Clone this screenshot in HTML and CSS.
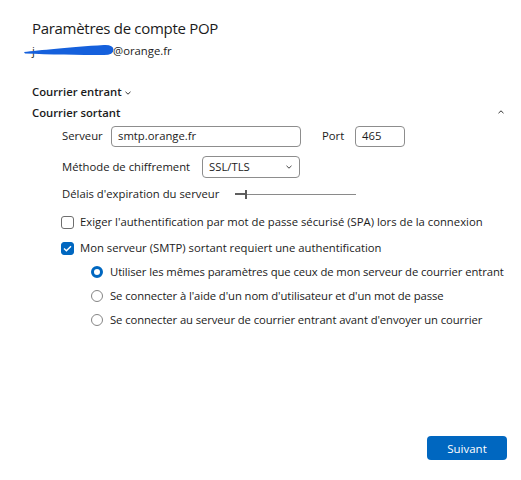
FILE: index.html
```html
<!DOCTYPE html>
<html lang="fr">
<head>
<meta charset="utf-8">
<title>Paramètres de compte POP</title>
<link rel="stylesheet" href="styles.css">
</head>
<body>
<div class="page">
  <header class="head">
    <h1 class="title">Paramètres de compte POP</h1>
    <div class="email"><span class="local">j<svg class="scribble" viewBox="0 0 90 12" preserveAspectRatio="none" aria-hidden="true"><path d="M0 8 C15 6.5 45 3 80 1 Q89 0.5 89.5 5.5 Q89.5 11 80 11 C55 11 25 10.5 1 9.5 Z" fill="#1560dc"/></svg></span><span class="domain">@orange.fr</span></div>
  </header>

  <section class="accounts">
    <div class="sec-head">
      <span class="sec-title">Courrier entrant</span>
      <svg class="chev-down" width="6" height="4" viewBox="0 0 6 4"><path d="M0.5 0.8 L3 3.2 L5.5 0.8" fill="none" stroke="#333" stroke-width="1"/></svg>
    </div>
    <div class="sec-head open">
      <span class="sec-title">Courrier sortant</span>
      <svg class="chev-up" width="6" height="4" viewBox="0 0 6 4"><path d="M0.5 3.2 L3 0.8 L5.5 3.2" fill="none" stroke="#333" stroke-width="1"/></svg>
    </div>

    <div class="panel">
      <div class="row row-server">
        <span class="lbl lbl-server">Serveur</span>
        <span class="field field-server">smtp.orange.fr</span>
        <span class="lbl lbl-port">Port</span>
        <span class="field field-port">465</span>
      </div>
      <div class="row row-enc">
        <span class="lbl lbl-enc">Méthode de chiffrement</span>
        <span class="field field-select">SSL/TLS
          <svg class="sel-chev" width="6" height="4" viewBox="0 0 6 4"><path d="M0.5 0.8 L3 3.2 L5.5 0.8" fill="none" stroke="#444" stroke-width="1"/></svg>
        </span>
      </div>
      <div class="row row-timeout">
        <span class="lbl">Délais d'expiration du serveur</span>
        <span class="slider">
          <span class="slider-fill"></span>
          <span class="slider-thumb"></span>
          <span class="slider-rest"></span>
        </span>
      </div>
      <div class="row row-check row-spa">
        <span class="checkbox"></span>
        <span class="txt">Exiger l'authentification par mot de passe sécurisé (SPA) lors de la connexion</span>
      </div>
      <div class="row row-check row-auth">
        <span class="checkbox checked">
          <svg width="9" height="7" viewBox="0 0 9 7"><path d="M1 3.6 L3.4 5.8 L8 1.2" fill="none" stroke="#fff" stroke-width="1.4"/></svg>
        </span>
        <span class="txt">Mon serveur (SMTP) sortant requiert une authentification</span>
      </div>
      <div class="radios">
        <div class="row row-radio first">
          <span class="radio selected"></span>
          <span class="txt">Utiliser les mêmes paramètres que ceux de mon serveur de courrier entrant</span>
        </div>
        <div class="row row-radio">
          <span class="radio"></span>
          <span class="txt">Se connecter à l'aide d'un nom d'utilisateur et d'un mot de passe</span>
        </div>
        <div class="row row-radio">
          <span class="radio"></span>
          <span class="txt">Se connecter au serveur de courrier entrant avant d'envoyer un courrier</span>
        </div>
      </div>
    </div>
  </section>

  <footer class="foot">
    <button class="primary">Suivant</button>
  </footer>
</div>
</body>
</html>
```

FILE: styles.css
```css
* { box-sizing: border-box; }
html, body { margin: 0; padding: 0; background: #fff; }
body {
  font-family: "Open Sans", "Noto Sans", sans-serif;
  font-size: 11.3px;
  color: #1b1b1b;
}
.page {
  width: 521px;
  height: 480px;
  display: flex;
  flex-direction: column;
  padding: 18px 14px 20px 32px;
}
.head { display: flex; flex-direction: column; }
.title {
  margin: 0;
  font-size: 15px;
  font-weight: 400;
  line-height: 20px;
  letter-spacing: -0.3px;
}
.email {
  margin-top: 5px;
  height: 16px;
  line-height: 16px;
  white-space: nowrap;
}
.local {
  position: relative;
  display: inline-block;
  width: 81px;
  height: 16px;
  vertical-align: top;
  color: #1b1b1b;
}
.scribble {
  position: absolute;
  left: -8px;
  top: 1px;
  width: 90px;
  height: 12px;
}
.domain { display: inline-block; vertical-align: top; }

.accounts { margin-top: 25px; display: flex; flex-direction: column; }
.sec-head {
  display: flex;
  align-items: center;
  height: 16px;
  line-height: 16px;
}
.sec-head.open { margin-top: 5px; justify-content: space-between; }
.sec-title { font-weight: 600; }
.chev-down { margin-left: 3px; margin-top: 2px; }
.chev-up { margin-right: 3px; margin-top: -2px; }

.panel {
  padding-left: 30px;
  display: flex;
  flex-direction: column;
}
.row { display: flex; align-items: center; }
.row-server { margin-top: 4px; height: 22px; }
.lbl { line-height: 16px; white-space: nowrap; }
.lbl-server { width: 49px; flex: none; }
.lbl-enc { width: 140px; flex: none; }
.field {
  display: flex;
  align-items: center;
  height: 21px;
  border: 1px solid #8d8d8d;
  border-radius: 4px;
  padding: 0 6px;
  line-height: 16px;
  background: #fff;
  flex: none;
}
.field-server { width: 190px; }
.lbl-port { margin-left: 21px; width: 33px; flex: none; }
.field-port { width: 50px; }
.row-enc { margin-top: 9px; height: 22px; }
.field-select {
  width: 98px;
  height: 22px;
  justify-content: space-between;
  padding-right: 7px;
}
.row-timeout { margin-top: 7px; height: 18px; }
.slider {
  margin-left: 16px;
  display: flex;
  align-items: center;
  width: 121px;
  height: 10px;
}
.slider-fill { width: 10px; height: 2px; background: #5f5f5f; }
.slider-thumb { width: 2px; height: 9px; background: #5a5a5a; }
.slider-rest { flex: 1; height: 1px; background: #8a8a8a; }

.row-check { height: 18px; }
.row-spa { margin-top: 10px; }
.row-auth { margin-top: 8px; }
.checkbox {
  width: 13px;
  height: 13px;
  border: 1px solid #6e6e6e;
  border-radius: 3px;
  margin-left: -1px;
  margin-right: 6px;
  display: flex;
  align-items: center;
  justify-content: center;
  flex: none;
}
.checkbox.checked { background: #0067c0; border-color: #0067c0; }
.txt { line-height: 16px; white-space: nowrap; }

.radios { padding-left: 29px; display: flex; flex-direction: column; }
.row-radio { height: 18px; margin-top: 6px; }
.row-radio .txt { letter-spacing: -0.1px; }
.radio {
  width: 12px;
  height: 12px;
  border-radius: 50%;
  border: 1px solid #858585;
  margin-right: 7px;
  flex: none;
}
.radio.selected { border: 3.5px solid #0067c0; background: #fff; }

.foot {
  margin-top: auto;
  display: flex;
  justify-content: flex-end;
}
.primary {
  width: 80px;
  height: 24px;
  border: none;
  border-radius: 4px;
  background: #0067c0;
  color: #fff;
  font-family: "Open Sans", "Noto Sans", sans-serif;
  font-size: 11.5px;
  padding: 0;
}
```
